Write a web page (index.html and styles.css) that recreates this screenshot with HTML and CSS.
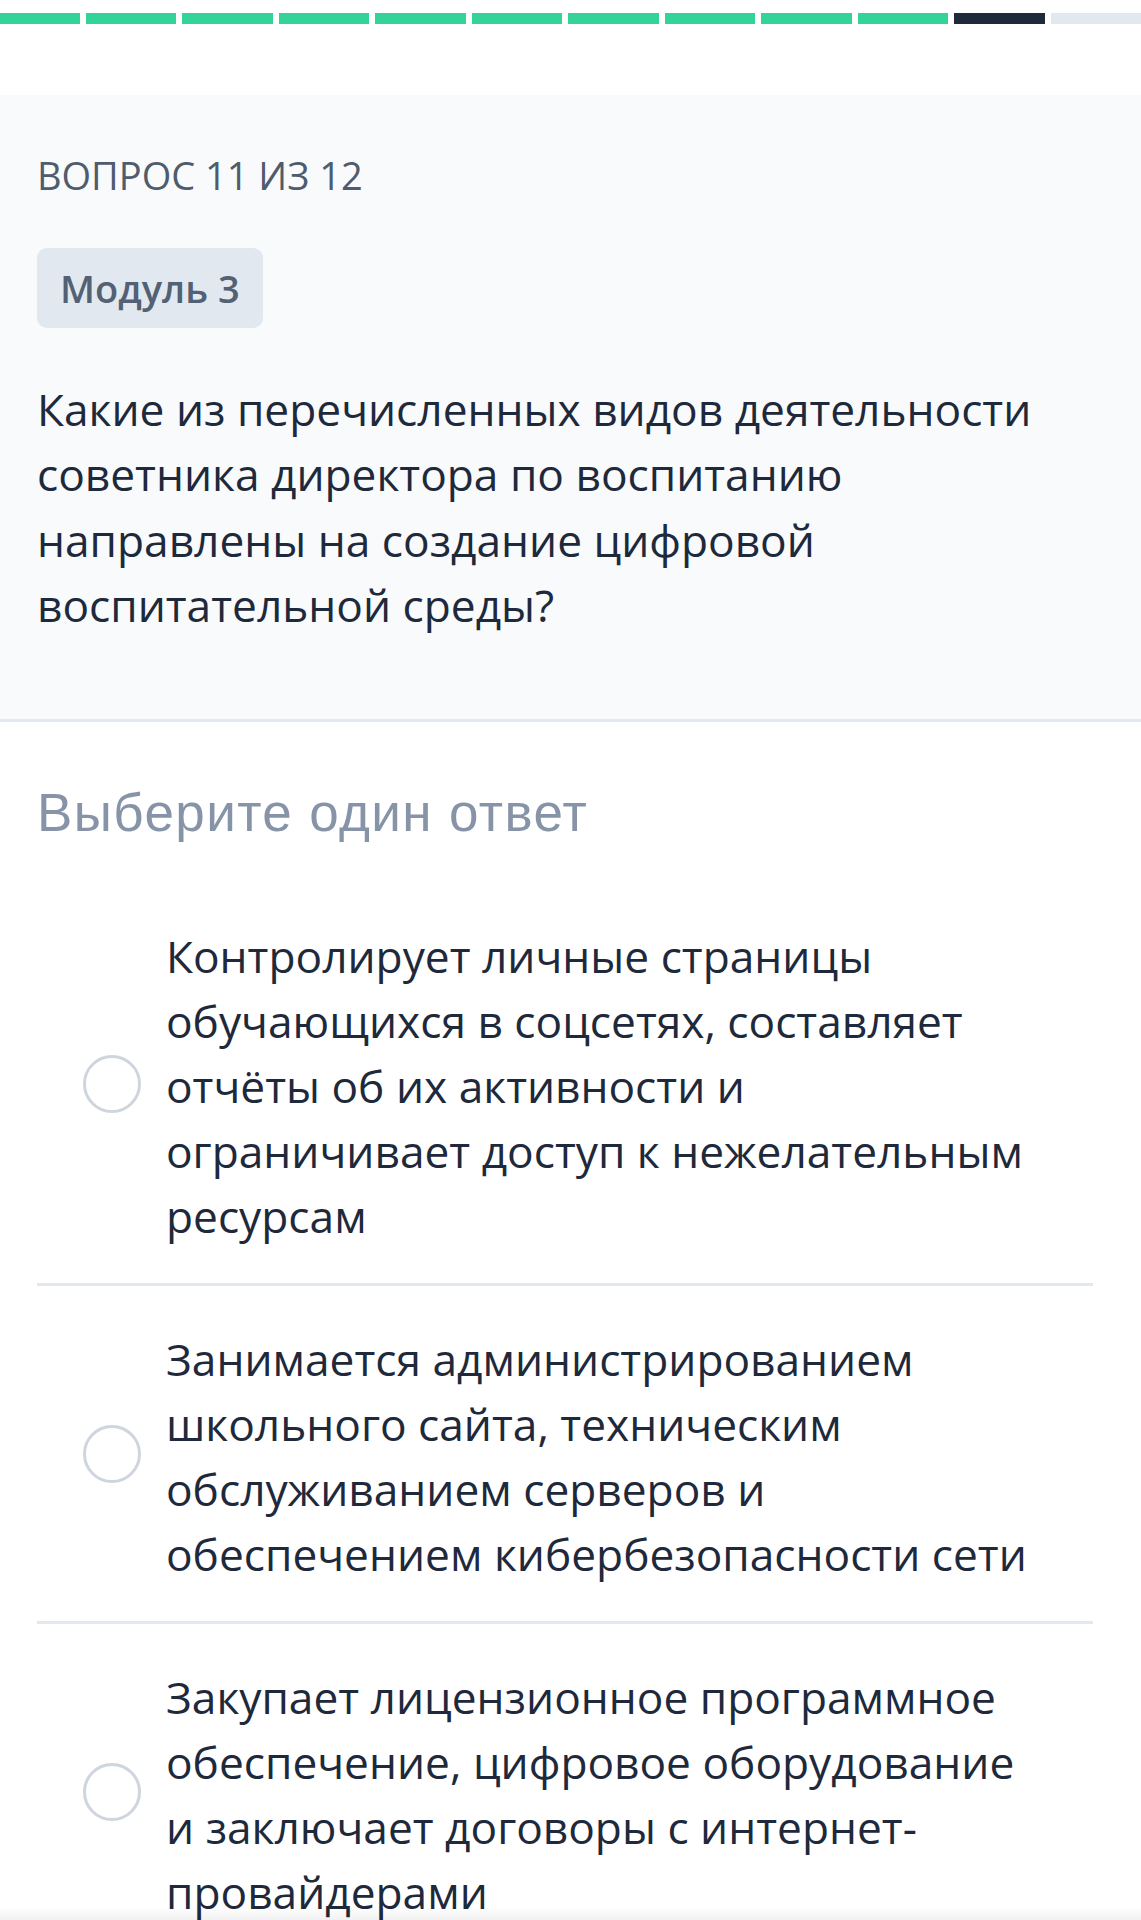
FILE: index.html
```html
<!DOCTYPE html>
<html lang="ru">
<head>
  <meta charset="UTF-8" />
  <title>Вопрос 11 из 12</title>
  <link rel="stylesheet" href="styles.css">
</head>
<body>
  <div class="progress">
    <div class="step done"></div>
    <div class="step done"></div>
    <div class="step done"></div>
    <div class="step done"></div>
    <div class="step done"></div>
    <div class="step done"></div>
    <div class="step done"></div>
    <div class="step done"></div>
    <div class="step done"></div>
    <div class="step done"></div>
    <div class="step current"></div>
    <div class="step"></div>
  </div>

  <div class="question-card">
    <div class="counter">Вопрос 11 из 12</div>
    <span class="module">Модуль 3</span>
    <p class="question">Какие из перечисленных видов деятельности советника директора по воспитанию направлены на создание цифровой воспитательной среды?</p>
  </div>

  <div class="answers">
    <h2 class="answers-title">Выберите один ответ</h2>
    <div class="options">
      <label class="option">
        <span class="radio"></span>
        <span class="option-text">Контролирует личные страницы обучающихся в соцсетях, составляет отчёты об их активности и ограничивает доступ к нежелательным ресурсам</span>
      </label>
      <label class="option">
        <span class="radio"></span>
        <span class="option-text">Занимается администрированием школьного сайта, техническим обслуживанием серверов и обеспечением кибербезопасности сети</span>
      </label>
      <label class="option">
        <span class="radio"></span>
        <span class="option-text">Закупает лицензионное программное обеспечение, цифровое оборудование и заключает договоры с интернет-провайдерами</span>
      </label>
    </div>
  </div>

  <div class="bottom-shade"></div>
</body>
</html>
```

FILE: styles.css
```css
body {
  font-family: 'Open Sans', 'Noto Sans', sans-serif;
  background: white;
  color: #1e293b;
  margin: 0;
  padding: 0;
}
.progress {
  display: flex;
  gap: 6px;
  margin: 13px 0 0 -11px;
  width: calc(100% + 11px);
  height: 11px;
}
.step {
  flex: 1;
  background: #e2e8f0;
}
.step.done {
  background: #34d399;
}
.step.current {
  background: #1e293b;
}

.question-card {
  margin-top: 71px;
  background: #f8fafc;
  padding: 52px 37px 81px;
  border-bottom: 3px solid #e2e8f0;
}
.counter {
  font-size: 38px;
  line-height: 57px;
  text-transform: uppercase;
  color: #4e5c6e;
}
.module {
  display: inline-flex;
  align-items: center;
  height: 80px;
  margin-top: 44px;
  padding: 0 23px;
  border-radius: 10px;
  background: #e2e8f0;
  color: #526174;
  font-size: 38px;
  font-weight: 600;
}
.question {
  margin: 49px 0 0;
  font-size: 44.25px;
  line-height: 65.3px;
  color: #1e293b;
}

.answers {
  padding: 0 48px 0 37px;
}
.answers-title {
  margin: 61px 0 0;
  font-family: 'Liberation Sans', Roboto, sans-serif;
  font-size: 53px;
  line-height: 60px;
  letter-spacing: 1.4px;
  font-weight: 400;
  color: #8794a8;
}
.options {
  margin-top: 81px;
}
.option {
  display: flex;
  align-items: center;
  gap: 25px;
  padding: 0 57px 34px 46px;
  border-bottom: 3px solid #e2e8f0;
}
.option + .option {
  padding-top: 41px;
}
.radio {
  flex: none;
  width: 52px;
  height: 52px;
  border: 3px solid #cfd5de;
  border-radius: 50%;
  margin-top: -6px;
}
.option-text {
  font-size: 44.25px;
  line-height: 65px;
  color: #1e293b;
}

.bottom-shade {
  position: fixed;
  left: 0;
  right: 0;
  bottom: 0;
  height: 14px;
  background: linear-gradient(rgba(0,0,0,0), rgba(0,0,0,0.05));
}
```
